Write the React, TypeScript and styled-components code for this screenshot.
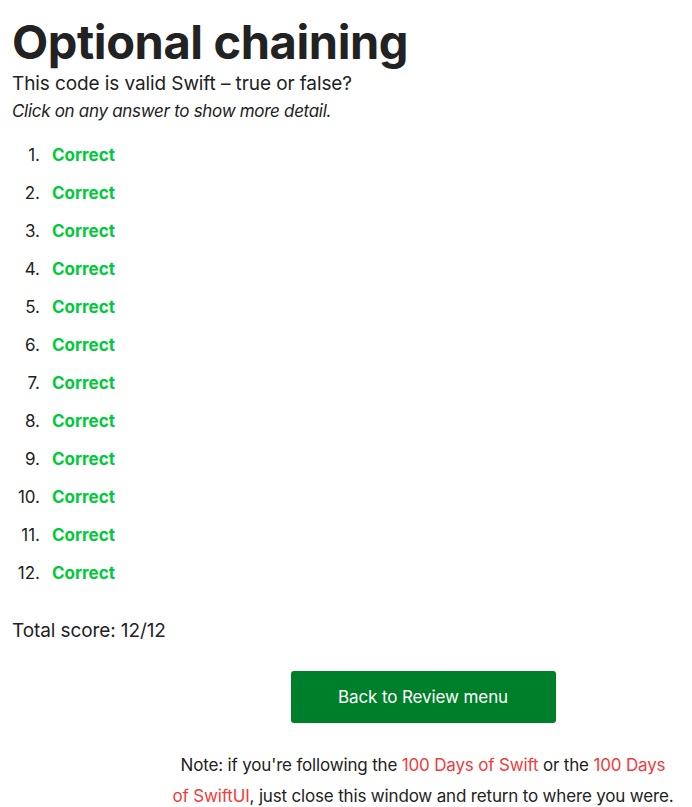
import styled, { createGlobalStyle } from "styled-components";

const GlobalStyle = createGlobalStyle`
    body {
        margin: 0;
        padding: 0 12px;
        font-family: Inter, "Liberation Sans", sans-serif;
        color: #222;
        background: #fff;
    }
`;

const Page = styled.div`
    display: flex;
    flex-direction: column;
`;

const Title = styled.h1`
    font-size: 47px;
    font-weight: 700;
    line-height: 58px;
    margin: 13px 0 0;
    letter-spacing: -0.4px;
`;

const Subtitle = styled.p`
    font-size: 19px;
    line-height: 28px;
    letter-spacing: -0.1px;
    margin: -1px 0 0;
`;

const Hint = styled.p`
    font-size: 17px;
    font-style: italic;
    line-height: 24px;
    letter-spacing: -0.3px;
    margin: 1px 0 0;
`;

const AnswerList = styled.ol`
    list-style: none;
    margin: 13px 0 0;
    padding: 0;
    display: flex;
    flex-direction: column;
`;

const AnswerRow = styled.li`
    display: grid;
    grid-template-columns: 28px auto;
    column-gap: 12px;
    height: 38px;
    align-items: center;
    font-size: 17px;
`;

const Num = styled.span`
    text-align: right;
`;

const Verdict = styled.a<{ $ok: boolean }>`
    color: ${p => p.$ok ? "#00c93c" : "#e0281f"};
    font-weight: 700;
    text-decoration: none;
    cursor: pointer;
`;

const Score = styled.p`
    font-size: 19px;
    line-height: 24px;
    letter-spacing: -0.1px;
    margin: 27px 0 0;
`;

const Footer = styled.div`
    margin-left: 154px;
    display: flex;
    flex-direction: column;
    align-items: center;
`;

const BackButton = styled.button`
    margin-top: 28px;
    width: 265px;
    height: 52px;
    border: none;
    border-radius: 3px;
    background: #007f2a;
    color: #fff;
    font-family: inherit;
    font-size: 17px;
    letter-spacing: -0.1px;
`;

const Note = styled.p`
    font-size: 17px;
    line-height: 31px;
    letter-spacing: -0.17px;
    text-align: center;
    margin: 27px 0 0;
`;

const RedLink = styled.a`
    color: #f23b3b;
    text-decoration: none;
`;

const answers = Array.from({ length: 12 }, (_, i) => ({ n: i + 1, ok: true }));

export default function App() {
    return <Page>
        <GlobalStyle />
        <Title>Optional chaining</Title>
        <Subtitle>This code is valid Swift – true or false?</Subtitle>
        <Hint>Click on any answer to show more detail.</Hint>
        <AnswerList>
            {answers.map(a => <AnswerRow key={a.n}>
                <Num>{a.n}.</Num>
                <Verdict $ok={a.ok}>{a.ok ? "Correct" : "Wrong"}</Verdict>
            </AnswerRow>)}
        </AnswerList>
        <Score>Total score: 12/12</Score>
        <Footer>
            <BackButton>Back to Review menu</BackButton>
            <Note>
                Note: if you're following the <RedLink>100 Days of Swift</RedLink> or the <RedLink>100 Days</RedLink><br />
                <RedLink>of SwiftUI</RedLink>, just close this window and return to where you were.
            </Note>
        </Footer>
    </Page>;
}
